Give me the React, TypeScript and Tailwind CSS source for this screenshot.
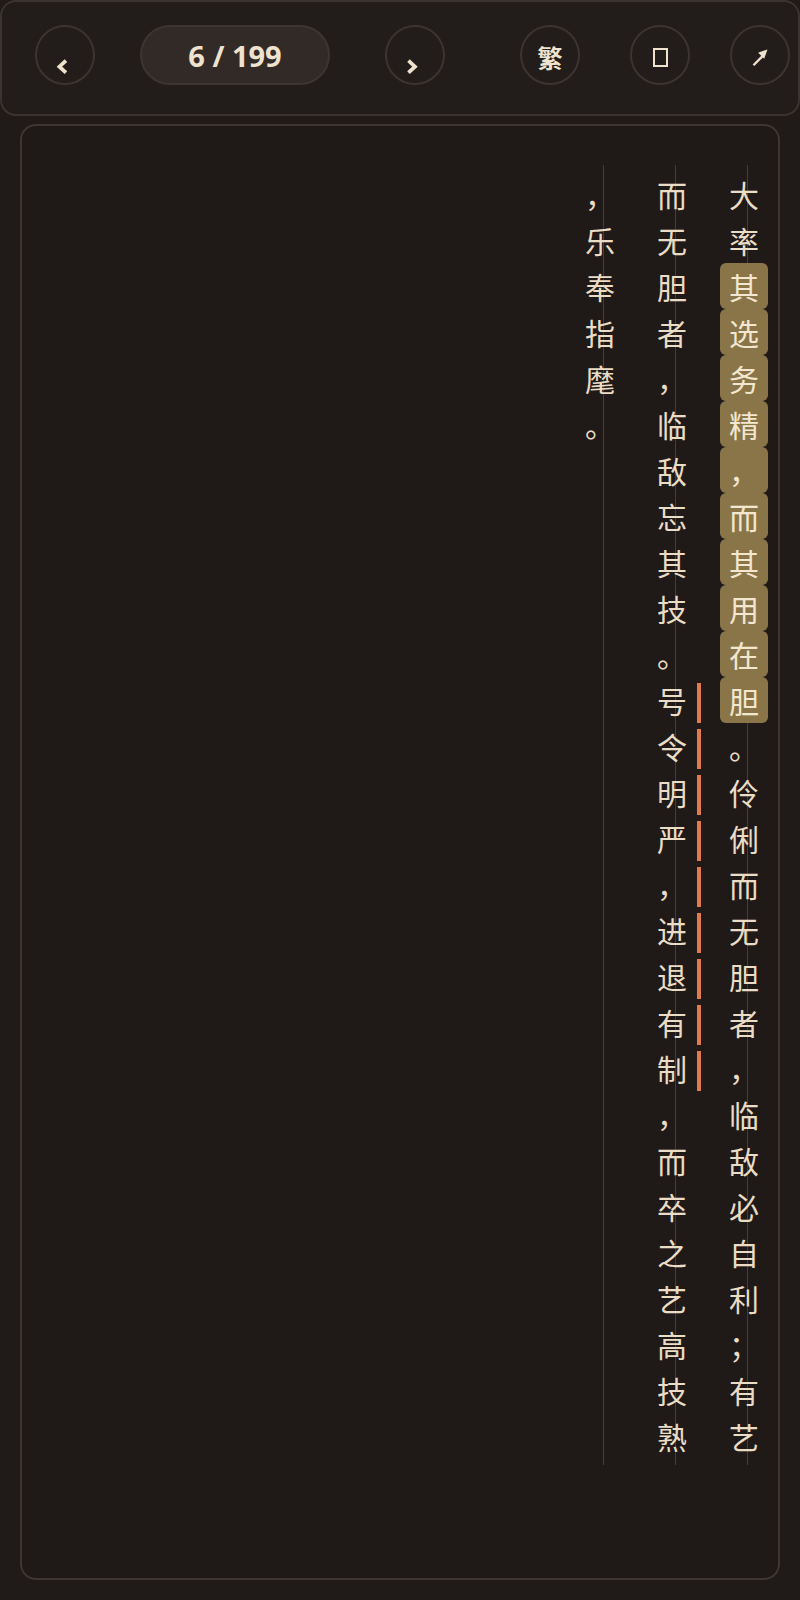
import React from "react";

const col1 = "大率其选务精，而其用在胆。伶俐而无胆者，临敌必自利；有艺";
const col2 = "而无胆者，临敌忘其技。号令明严，进退有制，而卒之艺高技熟";
const col3 = "，乐奉指麾。";

type ColProps = { text: string; hl?: [number, number]; ul?: [number, number] };

function Column({ text, hl, ul }: ColProps) {
  const chars = Array.from(text);
  return (
    <div className="relative w-[56px] h-[1300px] pt-[6px] shrink-0">
      <div className="absolute left-[27px] top-0 bottom-0 w-px bg-[#473d37]" />
      <div className="relative flex flex-col">
        {chars.map((c, i) => {
          const isHl = hl && i >= hl[0] && i <= hl[1];
          const isUl = ul && i >= ul[0] && i <= ul[1];
          return (
            <div
              key={i}
              className={
                "relative w-[48px] h-[46px] flex items-center justify-center text-[30px] leading-none " +
                (isHl ? "bg-[#8a7549] rounded-[6px] text-[#f3e7cf]" : "text-[#eadcc5]")
              }
            >
              <span>{c}</span>
              {isUl ? (
                <span className="absolute left-[49px] top-[6px] bottom-0 w-[4px] bg-[#e07b4d]" />
              ) : null}
            </div>
          );
        })}
      </div>
    </div>
  );
}

function Circle({ children, className = "" }: { children?: React.ReactNode; className?: string }) {
  return (
    <div
      className={
        "w-[60px] h-[60px] rounded-full border-2 border-[#3b3430] flex items-center justify-center shrink-0 " +
        className
      }
    >
      {children}
    </div>
  );
}

export default function App() {
  return (
    <div className="w-[800px] h-[1600px] bg-[#201b18] font-['Noto_Sans_CJK_SC',sans-serif] overflow-hidden">
      <div className="h-[116px] rounded-[16px] border-2 border-[#3a332f] bg-[#221d1a] flex items-start pt-[23px] pl-[33px]">
        <Circle>
          <svg width="60" height="60" viewBox="0 0 60 60">
            <polyline points="31,36 24,42.5 31,49" fill="none" stroke="#efe2cc" strokeWidth="4" />
          </svg>
        </Circle>
        <div className="ml-[45px] w-[190px] h-[60px] rounded-full border-2 border-[#3d3531] bg-[#322a26] flex items-center justify-center shrink-0">
          <span className="font-['Open_Sans',sans-serif] font-bold text-[29px] text-[#efe3cf] leading-none">6 / 199</span>
        </div>
        <Circle className="ml-[55px]">
          <svg width="60" height="60" viewBox="0 0 60 60">
            <polyline points="23,36 30,42.5 23,49" fill="none" stroke="#efe2cc" strokeWidth="4" />
          </svg>
        </Circle>
        <Circle className="ml-[75px]">
          <span className="text-[25px] font-bold text-[#efe3cf] leading-none mt-[5px]">繁</span>
        </Circle>
        <Circle className="ml-[50px]">
          <div className="w-[15px] h-[19px] border-[2.5px] border-[#efe3cf] mt-[4px]" />
        </Circle>
        <Circle className="ml-[40px]">
          <svg width="60" height="60" viewBox="0 0 60 60">
            <line x1="23" y1="41" x2="33" y2="31" stroke="#efe2cc" strokeWidth="2.5" />
            <polygon points="38,24 28,27.5 34.5,34" fill="#efe2cc" />
          </svg>
        </Circle>
      </div>
      <div className="mt-[8px] ml-[20px] w-[760px] h-[1456px] rounded-[16px] border-2 border-[#3d3631] bg-[#1f1a18]">
        <div className="flex flex-row-reverse gap-[16px] pr-[2px] pt-[39px]">
          <Column text={col1} hl={[2, 11]} />
          <Column text={col2} ul={[11, 19]} />
          <Column text={col3} />
        </div>
      </div>
    </div>
  );
}
